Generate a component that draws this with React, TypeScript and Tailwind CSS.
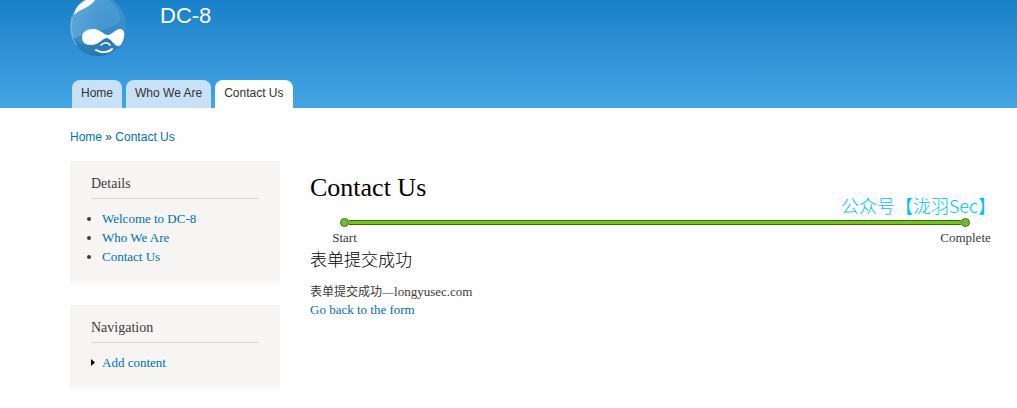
const tabs = [
  { label: "Home", active: false },
  { label: "Who We Are", active: false },
  { label: "Contact Us", active: true },
];

const details = ["Welcome to DC-8", "Who We Are", "Contact Us"];

const serif = "font-['Liberation_Serif','Noto_Sans_CJK_SC',serif]";

function Logo() {
  return (
    <svg width="60" height="57" viewBox="0 0 60 57" className="block">
      <defs>
        <radialGradient id="drop" cx="0.5" cy="0.35" r="0.65">
          <stop offset="0" stopColor="#2d84c4" />
          <stop offset="0.55" stopColor="#358ecb" />
          <stop offset="0.9" stopColor="#3d8fc7" />
          <stop offset="1" stopColor="#286fa6" />
        </radialGradient>
        <linearGradient id="shine" x1="0" y1="0.2" x2="1" y2="0.5">
          <stop offset="0" stopColor="#7dbbe5" stopOpacity="0.55" />
          <stop offset="1" stopColor="#65aee0" stopOpacity="0.3" />
        </linearGradient>
        <filter id="soft" x="-20%" y="-20%" width="140%" height="140%">
          <feGaussianBlur stdDeviation="0.6" />
        </filter>
      </defs>
      <path d="M13 0H43C51 6 56 15 56 27C56 44 44 56 28 56C11 56 0 43 0 27C0 14 6 5 13 0Z" fill="url(#drop)" />
      <path d="M14 0H39C47 6 51 12 50 21C43 31 20 30 3 39C-2 24 3 7 14 0Z" fill="url(#shine)" filter="url(#soft)" />
      <path d="M2 36C6 48 16 55 29 55C43 54 53 45 55 31C45 29 38 36 32 38C20 46 10 48 2 36Z" fill="#2673ad" opacity="0.7" />
      <path d="M2 17C0 27 1 39 7 45" fill="none" stroke="#9ccdec" strokeWidth="1.5" opacity="0.5" filter="url(#soft)" />
      <path d="M4 15C5 8 10 3 16 0H25C21 7 10 9 4 15Z" fill="#fff" filter="url(#soft)" />
      <path d="M12 37C12 32 17 29 23 29C31 29 33 35 38 35C42 35 45 29 50 29C54 29 55 33 54 37C53 42 51 46 48 46C44 46 42 39 37 38C33 38 29 45 21 45C15 45 12 42 12 37Z" fill="#fff" />
      <path d="M31 45C34 42 38 42 40 45" fill="none" stroke="#fff" strokeWidth="1.7" strokeLinecap="round" />
      <path d="M26 50C31 53 38 53 42 49" fill="none" stroke="#fff" strokeWidth="2" strokeLinecap="round" />
    </svg>
  );
}

function Block({ title, children }: { title: string; children: React.ReactNode }) {
  return (
    <section>
      <div className="bg-[#f6f5f4] px-[21px] pt-[13px]">
        <h2 className="border-b border-[#d6d6d6] pb-1 text-[14px] leading-5 text-[#3b3b3b]">{title}</h2>
        {children}
      </div>
      <div className="h-2 bg-linear-to-b from-[#f6f5f4] to-white" />
    </section>
  );
}

function Progress() {
  return (
    <div>
      <div className="flex items-center px-[30px]">
        <span className="size-[9px] rounded-full border border-[#3c780a] bg-[#7ab536]" />
        <span className="h-[5px] flex-1 border-y border-[#346c02] bg-[#76c226]" />
        <span className="size-[9px] rounded-full border border-[#3c780a] bg-[#7ab536]" />
      </div>
      <div className="flex justify-between pt-px text-center text-[13px] leading-5">
        <span className="w-[69px]">Start</span>
        <span className="w-[69px]">Complete</span>
      </div>
    </div>
  );
}

function App() {
  return (
    <div className={`min-h-screen bg-[#fefefe] text-[#3b3b3b] ${serif}`}>
      <header className="bg-linear-to-b from-[#1780c8] to-[#45a5e4] pl-[70px] font-['Liberation_Sans',sans-serif]">
        <div className="flex h-20 gap-[30px]">
          <Logo />
          <a href="#" className="pt-1 text-[22px] leading-6 text-white">DC-8</a>
        </div>
        <nav className="flex gap-1 pl-0.5">
          {tabs.map((tab) => (
            <a
              key={tab.label}
              href="#"
              className={`h-7 rounded-t-lg px-[9px] text-[12px] leading-[26px] text-[#333] ${tab.active ? "bg-[#fefefe]" : "bg-[#c9e1f6]"}`}
            >
              {tab.label}
            </a>
          ))}
        </nav>
      </header>

      <div className="pr-[17px] pl-[70px]">
        <nav className="pt-5 text-[12px] leading-[18px] font-['Liberation_Sans',sans-serif]">
          <a href="#" className="text-[#0071b3]">Home</a> » <a href="#" className="text-[#0071b3]">Contact Us</a>
        </nav>

        <div className="flex gap-[30px] pt-[15px]">
          <aside className="flex w-[210px] shrink-0 flex-col gap-[18px]">
            <Block title="Details">
              <ul className="list-disc pt-2.5 pb-[13px] pl-[11px] text-[13px] leading-[19px]">
                {details.map((item) => (
                  <li key={item}>
                    <a href="#" className="text-[#0071b3]">{item}</a>
                  </li>
                ))}
              </ul>
            </Block>
            <Block title="Navigation">
              <ul className="pt-2.5 pb-[13px] text-[13px] leading-[19px]">
                <li className="flex items-center gap-[7px]">
                  <svg width="4" height="7" viewBox="0 0 4 7">
                    <path d="M0 0L4 3.5L0 7Z" fill="#000" />
                  </svg>
                  <a href="#" className="text-[#0071b3]">Add content</a>
                </li>
              </ul>
            </Block>
          </aside>

          <main className="relative min-w-0 flex-1 pt-[9px]">
            <h1 className="pb-3 text-[26px] leading-9 text-black">Contact Us</h1>
            <span className="absolute top-8 right-1 font-['Noto_Sans_CJK_SC',sans-serif] text-[18px] leading-6 font-light text-[#00c3fb]">
              公众号【泷羽Sec】
            </span>
            <Progress />
            <h2 className="pt-px text-[17px] leading-6 font-light text-black">表单提交成功</h2>
            <div className="pt-2.5 text-[13px] leading-[18px]">
              <p><span className="text-[12px]">表单提交成功—</span>longyusec.com</p>
              <a href="#" className="block text-[#0071b3]">Go back to the form</a>
            </div>
          </main>
        </div>
      </div>
    </div>
  );
}

export default App;
